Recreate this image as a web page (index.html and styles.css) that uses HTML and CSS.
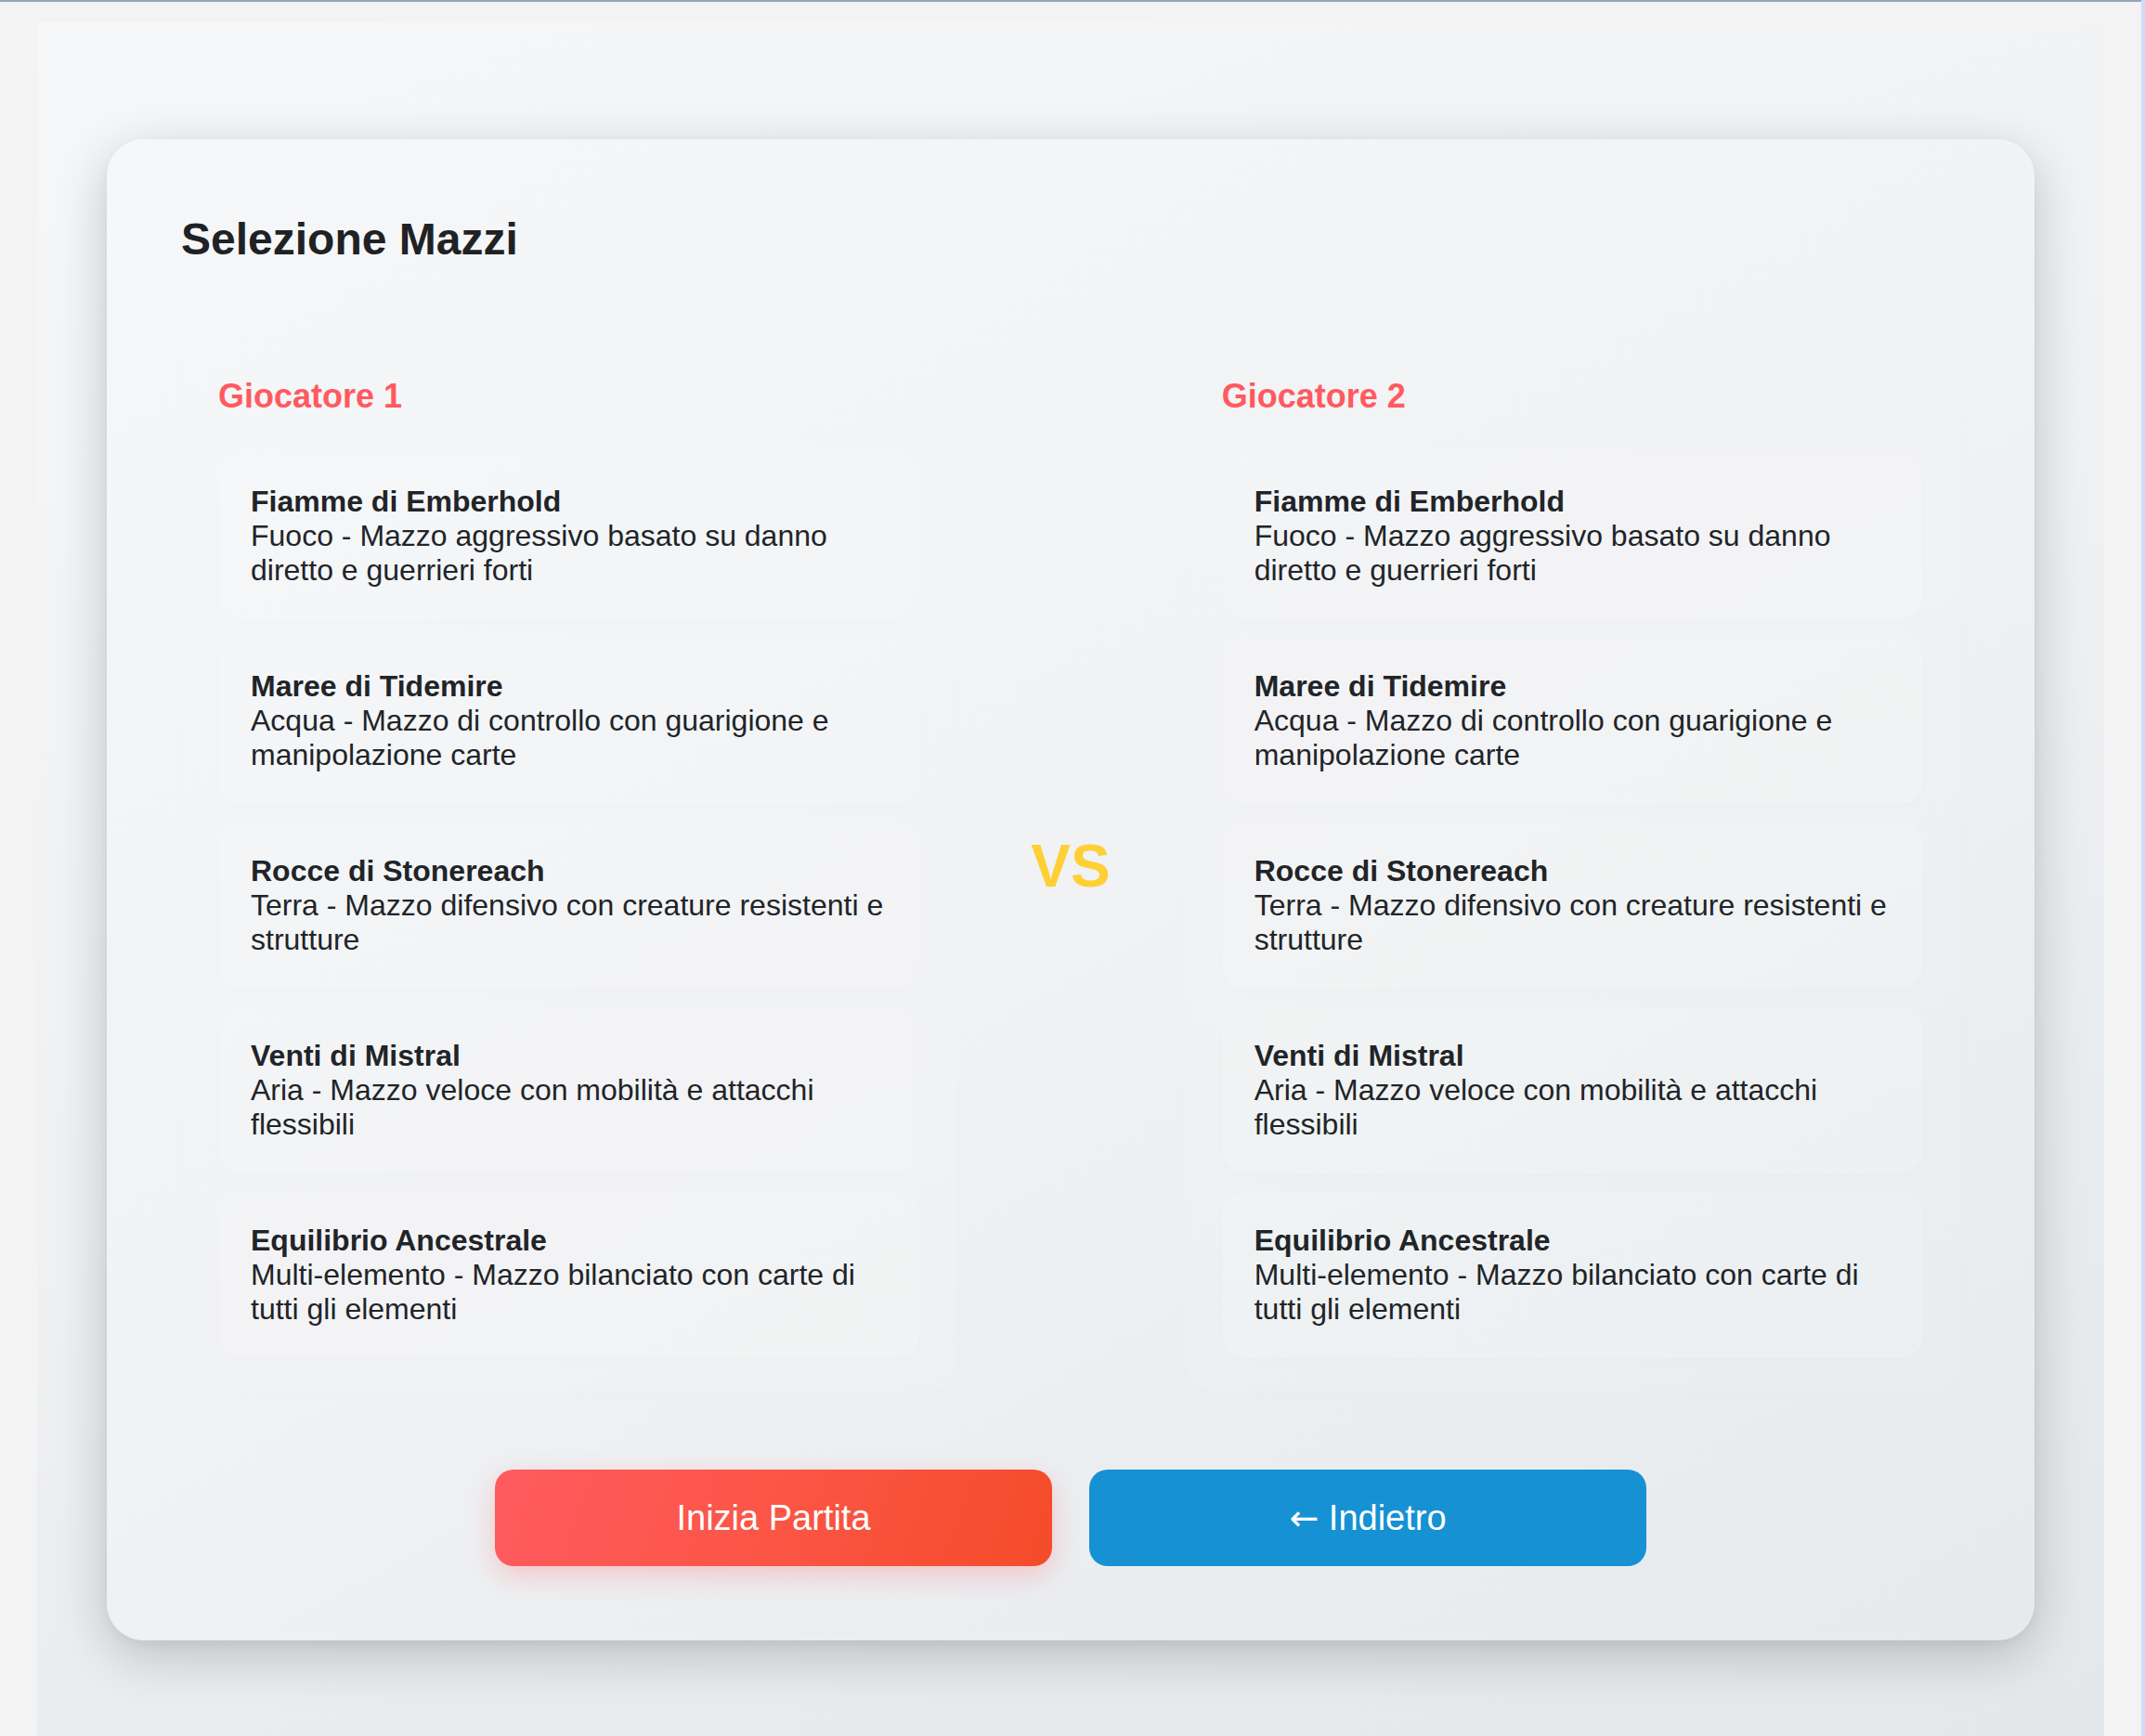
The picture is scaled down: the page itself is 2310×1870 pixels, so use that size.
FILE: index.html
```html
<!DOCTYPE html>
<html lang="it">
<head>
<meta charset="utf-8">
<title>Selezione Mazzi</title>
<link rel="stylesheet" href="styles.css">
</head>
<body>
<div class="panel">
  <div class="modal">
    <h2 class="modal-title">Selezione Mazzi</h2>
    <div class="players">
      <div class="player">
        <h3 class="player-name">Giocatore 1</h3>
        <div class="deck-list">
          <div class="deck"><div class="deck-name">Fiamme di Emberhold</div><div class="deck-desc">Fuoco - Mazzo aggressivo basato su danno diretto e guerrieri forti</div></div>
          <div class="deck"><div class="deck-name">Maree di Tidemire</div><div class="deck-desc">Acqua - Mazzo di controllo con guarigione e manipolazione carte</div></div>
          <div class="deck"><div class="deck-name">Rocce di Stonereach</div><div class="deck-desc">Terra - Mazzo difensivo con creature resistenti e strutture</div></div>
          <div class="deck"><div class="deck-name">Venti di Mistral</div><div class="deck-desc">Aria - Mazzo veloce con mobilità e attacchi flessibili</div></div>
          <div class="deck"><div class="deck-name">Equilibrio Ancestrale</div><div class="deck-desc">Multi-elemento - Mazzo bilanciato con carte di tutti gli elementi</div></div>
        </div>
      </div>
      <div class="vs">VS</div>
      <div class="player">
        <h3 class="player-name">Giocatore 2</h3>
        <div class="deck-list">
          <div class="deck"><div class="deck-name">Fiamme di Emberhold</div><div class="deck-desc">Fuoco - Mazzo aggressivo basato su danno diretto e guerrieri forti</div></div>
          <div class="deck"><div class="deck-name">Maree di Tidemire</div><div class="deck-desc">Acqua - Mazzo di controllo con guarigione e manipolazione carte</div></div>
          <div class="deck"><div class="deck-name">Rocce di Stonereach</div><div class="deck-desc">Terra - Mazzo difensivo con creature resistenti e strutture</div></div>
          <div class="deck"><div class="deck-name">Venti di Mistral</div><div class="deck-desc">Aria - Mazzo veloce con mobilità e attacchi flessibili</div></div>
          <div class="deck"><div class="deck-name">Equilibrio Ancestrale</div><div class="deck-desc">Multi-elemento - Mazzo bilanciato con carte di tutti gli elementi</div></div>
        </div>
      </div>
    </div>
    <div class="actions">
      <button class="btn btn-start">Inizia Partita</button>
      <button class="btn btn-back"><span class="arrow">←</span> Indietro</button>
    </div>
  </div>
</div>
</body>
</html>
```

FILE: styles.css
```css
html {
  background: #f3f3f3;
  border-right: 4px solid #d0dcf8;
}
body {
  margin: 0;
  border-top: 2px solid #95a4bd;
  background: #f3f3f3;
  font-family: "Liberation Sans", Arial, Helvetica, sans-serif;
  color: #212428;
  min-height: 1868px;
  overflow: hidden;
}
.panel {
  margin: 22px 0 0 40px;
  width: 2226px;
  min-height: 1900px;
  box-sizing: border-box;
  padding: 126px 75px 80px;
  background: linear-gradient(160deg, #f6f7f9 0%, #eef0f2 50%, #e3e7ea 100%);
}
.modal {
  border-radius: 40px;
  padding: 80px 80px 80px;
  background: linear-gradient(150deg, #f6f7f9 0%, #f0f2f4 50%, #e6eaed 100%);
  box-shadow: 0 16px 56px rgba(0, 0, 0, 0.2), 0 4px 12px rgba(0, 0, 0, 0.04);
}
.modal-title {
  margin: 0 0 81px;
  font-size: 48px;
  line-height: 55px;
  font-weight: 700;
  color: #1f2225;
}
.players {
  display: grid;
  grid-template-columns: 1fr auto 1fr;
  column-gap: 80px;
  align-items: center;
}
.player {
  padding: 40px 40px 36px;
  border-radius: 30px;
  background: rgba(255, 255, 255, 0.07);
  box-shadow: 0 2px 10px rgba(0, 0, 0, 0.01);
}
.player-name {
  margin: 0 0 41px;
  font-size: 36px;
  line-height: 41px;
  font-weight: 700;
  color: #ff5a5f;
}
.deck-list {
  display: flex;
  flex-direction: column;
  gap: 20px;
}
.deck {
  padding: 34px 28px 34px 35px;
  border-radius: 24px;
  background: rgba(255, 255, 255, 0.14);
  box-shadow: 0 2px 8px rgba(0, 0, 0, 0.012);
  font-size: 32px;
  line-height: 37px;
}
.deck-name {
  font-weight: 700;
}
.deck-desc {
  font-weight: 400;
}
.vs {
  font-size: 64px;
  font-weight: 700;
  color: #ffd035;
  line-height: 1;
}
.actions {
  display: flex;
  justify-content: center;
  gap: 40px;
  margin-top: 84px;
}
.btn {
  width: 600px;
  height: 104px;
  border: 0;
  border-radius: 20px;
  font-family: "Liberation Sans", Arial, Helvetica, sans-serif;
  font-size: 38px;
  color: #ffffff;
  cursor: pointer;
}
.arrow {
  font-family: "DejaVu Sans", sans-serif;
  font-size: 38px;
}
.btn-start {
  background: linear-gradient(110deg, #ff5a5f 0%, #fc5649 45%, #f44b29 100%);
  box-shadow: 0 10px 30px rgba(255, 90, 95, 0.28);
}
.btn-back {
  background: #1691d4;
}
```
